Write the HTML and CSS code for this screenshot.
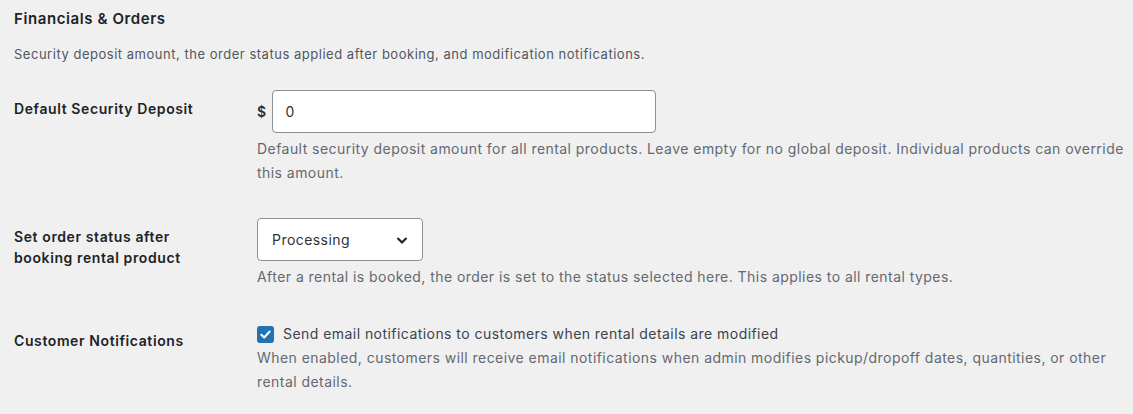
FILE: index.html
```html
<!DOCTYPE html>
<html lang="en">
<head>
    <meta charset="UTF-8">
    <meta name="viewport" content="width=device-width, initial-scale=1.0">
    <title>Financials &amp; Orders</title>
    <link rel="stylesheet" href="styles.css">
</head>
<body>
    <div class="wrap">
        <!-- Section heading -->
        <h2 class="section-title">Financials &amp; Orders</h2>
        <p class="section-intro">Security deposit amount, the order status applied after booking, and modification notifications.</p>

        <div class="form-table">
            <!-- Security deposit -->
            <div class="form-row">
                <div class="form-label"><label for="deposit">Default Security Deposit</label></div>
                <div class="form-field">
                    <div class="money-field">
                        <span class="currency">$</span>
                        <input type="text" id="deposit" class="text-input" value="0">
                    </div>
                    <p class="description">Default security deposit amount for all rental products. Leave empty for no global deposit. Individual products can override this amount.</p>
                </div>
            </div>

            <!-- Order status -->
            <div class="form-row">
                <div class="form-label"><label for="status">Set order status after booking rental product</label></div>
                <div class="form-field">
                    <select id="status" class="select-input">
                        <option selected>Processing</option>
                        <option>On hold</option>
                        <option>Completed</option>
                    </select>
                    <p class="description">After a rental is booked, the order is set to the status selected here. This applies to all rental types.</p>
                </div>
            </div>

            <!-- Notifications -->
            <div class="form-row">
                <div class="form-label"><label for="notify">Customer Notifications</label></div>
                <div class="form-field">
                    <label class="checkbox-line" for="notify">
                        <input type="checkbox" id="notify" class="checkbox-input" checked>
                        <span class="checkbox-box">
                            <svg viewBox="0 0 16 16"><path d="M3.6 8.3l3 2.9 5.8-6.4" fill="none" stroke="#fff" stroke-width="2.2" stroke-linecap="round" stroke-linejoin="round"/></svg>
                        </span>
                        Send email notifications to customers when rental details are modified
                    </label>
                    <p class="description tight">When enabled, customers will receive email notifications when admin modifies pickup/dropoff dates, quantities, or other rental details.</p>
                </div>
            </div>
        </div>
    </div>
</body>
</html>
```

FILE: styles.css
```css
/* General */
body {
    margin: 0;
    background-color: #f0f0f1;
    color: #3c434a;
    font-family: Inter, "Noto Sans", sans-serif;
    font-size: 14px;
    letter-spacing: 0.45px;
}

.wrap {
    padding: 9px 8px 0 14px;
}

/* Heading */
.section-title {
    margin: 0;
    font-size: 15px;
    line-height: 20px;
    font-weight: 600;
    letter-spacing: 0.6px;
    color: #1d2327;
}

.section-intro {
    margin: 15px 0 0;
    font-size: 13px;
    line-height: 20px;
    letter-spacing: 0.52px;
    color: #50575e;
}

/* Table rows */
.form-table {
    margin-top: 11px;
}

.form-row {
    display: grid;
    grid-template-columns: 243px 1fr;
}

.form-label {
    width: 200px;
    padding-top: 23px;
    font-weight: 600;
    line-height: 21px;
    letter-spacing: 0.6px;
    color: #1d2327;
}

.form-field {
    padding: 15px 0 18px;
}

/* Money input */
.money-field {
    display: flex;
    align-items: center;
    gap: 5px;
}

.currency {
    font-weight: 600;
    color: #2c3338;
}

.text-input {
    width: 384px;
    height: 43px;
    box-sizing: border-box;
    padding: 0 13px;
    border: 1px solid #8c8f94;
    border-radius: 4px;
    background-color: #fff;
    font-family: inherit;
    font-size: 14px;
    letter-spacing: inherit;
    color: #2c3338;
    outline: none;
}

/* Select */
.select-input {
    appearance: none;
    width: 166px;
    height: 43px;
    padding: 0 14px;
    border: 1px solid #8c8f94;
    border-radius: 4px;
    background: #fff url("data:image/svg+xml,%3Csvg xmlns='http://www.w3.org/2000/svg' viewBox='0 0 20 20'%3E%3Cpath d='M5.5 8l4.5 4.5 4.5-4.5' fill='none' stroke='%231d2327' stroke-width='2.2'/%3E%3C/svg%3E") no-repeat right 10px center;
    background-size: 20px;
    font-family: inherit;
    font-size: 14px;
    letter-spacing: inherit;
    color: #2c3338;
    display: block;
}

/* Descriptions */
.description {
    margin: 4px 0 0;
    line-height: 24px;
    color: #646970;
}

.description.tight {
    margin-top: 0;
}

/* Checkbox */
.checkbox-line {
    display: flex;
    align-items: center;
    gap: 9px;
    line-height: 24px;
    color: #3c434a;
}

.checkbox-input {
    display: none;
}

.checkbox-box {
    width: 17px;
    height: 17px;
    border-radius: 3px;
    background-color: #2271b1;
    display: flex;
    align-items: center;
    justify-content: center;
}

.checkbox-box svg {
    width: 15px;
    height: 15px;
}
```
